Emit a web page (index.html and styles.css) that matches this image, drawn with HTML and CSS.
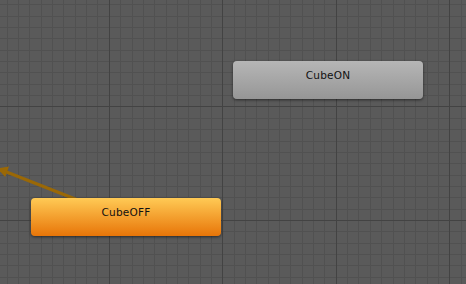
FILE: index.html
```html
<!DOCTYPE html>
<html lang="en">

<head>
    <meta charset="UTF-8">
    <meta name="viewport" content="width=device-width, initial-scale=1.0">
    <title>Animator</title>
    <link rel="stylesheet" href="styles.css">
</head>

<body>
    <main class="graph">
        <svg class="grid" width="466" height="284" viewBox="0 0 466 284"></svg>
        <svg class="edges" width="466" height="284" viewBox="0 0 466 284">
            <line class="transition" x1="121" y1="217" x2="4" y2="171" />
            <polygon class="arrow" points="-2.5,168.5 9,166.6 5.2,177" />
        </svg>
        <div class="node node-on">
            <div class="node-name">CubeON</div>
        </div>
        <div class="node node-off">
            <div class="node-name">CubeOFF</div>
        </div>
    </main>
    <script>
        "use strict";
        const grid = document.querySelector(".grid");
        const step = 11.35;

        function addLine(x1, y1, x2, y2, major) {
            const line = document.createElementNS("http://www.w3.org/2000/svg", "line");
            line.setAttribute("x1", x1);
            line.setAttribute("y1", y1);
            line.setAttribute("x2", x2);
            line.setAttribute("y2", y2);
            line.setAttribute("class", major ? "major" : "minor");
            grid.appendChild(line);
        }

        for (let n = 0; n < 42; n++) {
            const x = Math.floor(7.15 + step * n) + 0.5;
            if ((n - 9) % 10 !== 0) addLine(x, 0, x, 284, false);
        }
        for (let n = 0; n < 26; n++) {
            const y = Math.floor(4.85 + step * n) + 0.5;
            if ((n - 9) % 10 !== 0) addLine(0, y, 466, y, false);
        }
        // major lines drawn last so they sit on top
        for (let n = 9; n < 42; n += 10) {
            const x = Math.floor(7.15 + step * n) + 0.5;
            addLine(x, 0, x, 284, true);
        }
        for (let n = 9; n < 26; n += 10) {
            const y = Math.floor(4.85 + step * n) + 0.5;
            addLine(0, y, 466, y, true);
        }
    </script>
</body>

</html>
```

FILE: styles.css
```css
* {
    box-sizing: border-box;
    margin: 0;
    padding: 0;
}

body {
    background: #5a5a5a;
    overflow: hidden;
}

.graph {
    position: relative;
    width: 466px;
    height: 284px;
    background: #5a5a5a;
    font-family: "DejaVu Sans", Verdana, sans-serif;
}

.grid,
.edges {
    position: absolute;
    top: 0;
    left: 0;
}

.grid .minor {
    stroke: #515151;
    stroke-width: 1;
}

.grid .major {
    stroke: #434343;
    stroke-width: 1;
}

.transition {
    stroke: #9a6806;
    stroke-width: 3;
}

.arrow {
    fill: #9a6806;
}

.node {
    position: absolute;
    width: 190px;
    height: 38px;
    border-radius: 4px;
    padding-top: 8px;
    box-shadow: 0 1px 3px rgba(0, 0, 0, 0.55);
}

.node-on {
    left: 233px;
    top: 61px;
    background: linear-gradient(#b6b6b6, #969696);
}

.node-off {
    left: 31px;
    top: 198px;
    background: linear-gradient(#ffca55, #e87508);
}

.node-name {
    text-align: center;
    font-size: 10.5px;
    line-height: 12px;
    color: #111;
    letter-spacing: 0.2px;
}
```
